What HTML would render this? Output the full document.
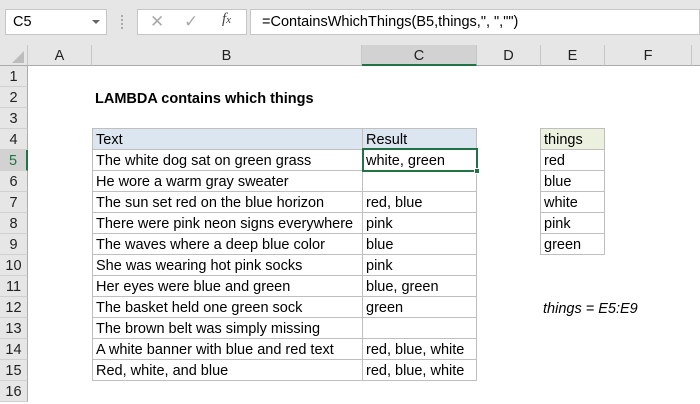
<!DOCTYPE html>
<html><head><style>
*{margin:0;padding:0;box-sizing:border-box}
body{width:700px;height:400px;background:#fff;font-family:"Liberation Sans",sans-serif;position:relative;overflow:hidden}
.a{position:absolute}
.t{position:absolute;font-size:14.5px;color:#000;white-space:nowrap;line-height:21px}
.hd{position:absolute;top:45px;height:21px;background:#e6e6e6;border-right:1px solid #c6c6c6;border-bottom:1px solid #ababab;font-size:14.5px;text-align:center;line-height:22px;color:#222}
.rn{position:absolute;left:0;width:28px;height:21px;background:#e6e6e6;border-bottom:1px solid #d0d0d0;border-right:1px solid #ababab;font-size:14.5px;text-align:center;line-height:23px;color:#222}
.c{position:absolute;height:22px;border:1px solid #bfbfbf;font-size:14.5px;line-height:23px;padding-left:3px;white-space:nowrap}
</style></head><body>
<div class="a" style="left:0;top:0;width:700px;height:45px;background:#e6e6e6"></div>
<div class="a" style="left:5px;top:9px;width:102px;height:26px;background:#fff;border:1px solid #c6c6c6;font-size:14.5px;line-height:25px;padding-left:7px">C5</div>
<div class="a" style="left:92px;top:20px;width:0;height:0;border-left:4px solid transparent;border-right:4px solid transparent;border-top:4px solid #666"></div>
<div class="a" style="left:121px;top:15px;width:2px;height:14px;border-left:2px dotted #aaa"></div>
<div class="a" style="left:137px;top:9px;width:110px;height:26px;background:#fff;border:1px solid #c6c6c6"></div>
<div class="a" style="left:150px;top:12px;font-size:17px;color:#aaa">✕</div>
<div class="a" style="left:184px;top:12px;font-size:17px;color:#aaa">✓</div>
<div class="a" style="left:222px;top:11px;font-size:15px;font-style:italic;font-family:'Liberation Serif',serif;color:#444"><i>f</i><span style="font-size:11px">x</span></div>
<div class="a" style="left:250px;top:9px;width:450px;height:26px;background:#fff;border:1px solid #c6c6c6;font-size:14.5px;line-height:25px;padding-left:11px">=ContainsWhichThings(B5,things,", ","")</div>

<div class="hd" style="left:0;width:28px;background:#e6e6e6"></div>
<div class="a" style="left:12px;top:51px;width:0;height:0;border-left:12px solid transparent;border-bottom:12px solid #bdbdbd"></div>
<div class="hd" style="left:28px;width:64px">A</div>
<div class="hd" style="left:92px;width:270px">B</div>
<div class="hd" style="left:362px;width:115px;background:#d2d2d2;border-bottom:2px solid #217346">C</div>
<div class="hd" style="left:477px;width:64px">D</div>
<div class="hd" style="left:541px;width:64px">E</div>
<div class="hd" style="left:605px;width:87px">F</div>
<div class="hd" style="left:692px;width:8px;border-right:none"></div>

<div class="rn" style="top:66px">1</div>
<div class="rn" style="top:87px">2</div>
<div class="rn" style="top:108px">3</div>
<div class="rn" style="top:129px">4</div>
<div class="rn" style="top:150px;background:#d2d2d2;color:#217346;border-right:2px solid #217346">5</div>
<div class="rn" style="top:171px">6</div>
<div class="rn" style="top:192px">7</div>
<div class="rn" style="top:213px">8</div>
<div class="rn" style="top:234px">9</div>
<div class="rn" style="top:255px">10</div>
<div class="rn" style="top:276px">11</div>
<div class="rn" style="top:297px">12</div>
<div class="rn" style="top:318px">13</div>
<div class="rn" style="top:339px">14</div>
<div class="rn" style="top:360px">15</div>
<div class="rn" style="top:381px">16</div>

<div class="t" style="left:95px;top:89px;font-weight:bold;font-size:14.5px">LAMBDA contains which things</div>

<div class="c" style="left:92px;top:128px;width:271px;background:#dce6f1">Text</div>
<div class="c" style="left:362px;top:128px;width:115px;background:#dce6f1">Result</div>

<div class="c" style="left:92px;top:149px;width:271px">The white dog sat on green grass</div>
<div class="c" style="left:362px;top:149px;width:115px">white, green</div>
<div class="c" style="left:92px;top:170px;width:271px">He wore a warm gray sweater</div>
<div class="c" style="left:362px;top:170px;width:115px"></div>
<div class="c" style="left:92px;top:191px;width:271px">The sun set red on the blue horizon</div>
<div class="c" style="left:362px;top:191px;width:115px">red, blue</div>
<div class="c" style="left:92px;top:212px;width:271px">There were pink neon signs everywhere</div>
<div class="c" style="left:362px;top:212px;width:115px">pink</div>
<div class="c" style="left:92px;top:233px;width:271px">The waves where a deep blue color</div>
<div class="c" style="left:362px;top:233px;width:115px">blue</div>
<div class="c" style="left:92px;top:254px;width:271px">She was wearing hot pink socks</div>
<div class="c" style="left:362px;top:254px;width:115px">pink</div>
<div class="c" style="left:92px;top:275px;width:271px">Her eyes were blue and green</div>
<div class="c" style="left:362px;top:275px;width:115px">blue, green</div>
<div class="c" style="left:92px;top:296px;width:271px">The basket held one green sock</div>
<div class="c" style="left:362px;top:296px;width:115px">green</div>
<div class="c" style="left:92px;top:317px;width:271px">The brown belt was simply missing</div>
<div class="c" style="left:362px;top:317px;width:115px"></div>
<div class="c" style="left:92px;top:338px;width:271px">A white banner with blue and red text</div>
<div class="c" style="left:362px;top:338px;width:115px">red, blue, white</div>
<div class="c" style="left:92px;top:359px;width:271px">Red, white, and blue</div>
<div class="c" style="left:362px;top:359px;width:115px">red, blue, white</div>

<div class="a" style="left:362px;top:148px;width:116px;height:24px;border:2px solid #217346"></div>
<div class="a" style="left:474px;top:168px;width:6px;height:6px;background:#217346;border:1px solid #fff"></div>

<div class="c" style="left:540px;top:128px;width:65px;background:#ebf1de">things</div>
<div class="c" style="left:540px;top:149px;width:65px">red</div>
<div class="c" style="left:540px;top:170px;width:65px">blue</div>
<div class="c" style="left:540px;top:191px;width:65px">white</div>
<div class="c" style="left:540px;top:212px;width:65px">pink</div>
<div class="c" style="left:540px;top:233px;width:65px">green</div>

<div class="t" style="left:543px;top:299px;font-style:italic">things = E5:E9</div>
</body></html>
